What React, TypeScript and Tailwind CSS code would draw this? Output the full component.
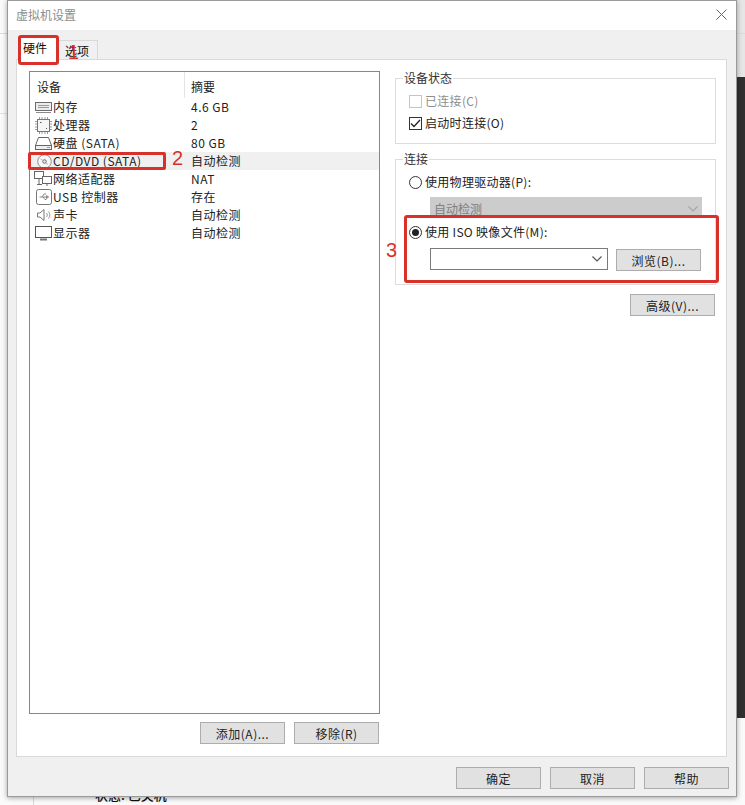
import React from 'react';

const font = { fontFamily: '"Noto Sans CJK SC", "Liberation Sans", sans-serif' };
const digitFont = { fontFamily: '"Liberation Sans", sans-serif' };

const MemoryIcon = () => (
  <svg width="17" height="13" viewBox="0 0 17 13" fill="none" stroke="#6b6b6b">
    <rect x="0.5" y="1.5" width="16" height="8" fill="#ececec" />
    <path d="M3 4.500h11M3 6.500h11" stroke="#9a9a9a" />
    <path d="M1 11.500h15" stroke="#8a8a8a" />
  </svg>
);

const CpuIcon = () => (
  <svg width="17" height="17" viewBox="0 0 17 17" fill="none" stroke="#777">
    <rect x="2.500" y="2.500" width="12" height="12" fill="#f6f6f6" />
    <path d="M4.500 0v2M7 0v2M10 0v2M12.500 0v2M4.500 15v2M7 15v2M10 15v2M12.500 15v2M0 4.500h2M0 7h2M0 10h2M0 12.500h2M15 4.500h2M15 7h2M15 10h2M15 12.500h2" stroke="#999" />
    <path d="M5 5.500h1.500M11 11.500h1" stroke="#555" />
  </svg>
);

const DiskIcon = () => (
  <svg width="17" height="14" viewBox="0 0 17 14" fill="none" stroke="#666">
    <path d="M3.500 1.500h10l3 8h-16z" fill="#fff" />
    <rect x="0.500" y="9.500" width="16" height="4" fill="#eee" />
    <path d="M12 11.500h3" stroke="#999" />
  </svg>
);

const CdIcon = () => (
  <svg width="15" height="15" viewBox="0 0 15 15" fill="none" stroke="#8f8f8f">
    <circle cx="7.500" cy="7.500" r="6.800" fill="#f7f7f7" />
    <circle cx="7.500" cy="7.500" r="1.800" fill="#e4e4e4" stroke="#707070" />
    <path d="M3.500 5l2 1.200M11 10.500l-2-1.500" stroke="#bbb" />
  </svg>
);

const NetworkIcon = () => (
  <svg width="18" height="16" viewBox="0 0 18 16" fill="none" stroke="#666">
    <rect x="0.500" y="0.500" width="9" height="7" fill="#fff" />
    <rect x="8.500" y="5.500" width="9" height="7" fill="#fff" />
    <path d="M5 8v5M3 13.500h5M13 13v2" />
  </svg>
);

const UsbIcon = () => (
  <svg width="16" height="16" viewBox="0 0 16 16" fill="none" stroke="#777">
    <rect x="0.500" y="0.500" width="15" height="15" rx="2" fill="#fff" />
    <path d="M3.500 8h9M12.500 8l-2-1.500v3zM6 8l2-3h2M7 8l2 2.500h1.500" stroke="#888" />
  </svg>
);

const SoundIcon = () => (
  <svg width="16" height="14" viewBox="0 0 16 14" fill="none" stroke="#777">
    <path d="M1.500 5h2.500l4-3.500v11l-4-3.500H1.500z" fill="#fff" />
    <path d="M10.500 5c1 1.200 1 2.800 0 4M12.500 3.500c1.800 2 1.800 5 0 7" stroke="#999" />
  </svg>
);

const DisplayIcon = () => (
  <svg width="17" height="15" viewBox="0 0 17 15" fill="none" stroke="#555">
    <rect x="0.500" y="0.500" width="16" height="11" fill="#fff" />
    <path d="M5 13.500h7" strokeWidth="2" stroke="#777" />
  </svg>
);

const Chevron = ({ color = '#555' }: { color?: string }) => (
  <svg width="10" height="6" viewBox="0 0 10 6" fill="none" stroke={color} strokeWidth="1.200">
    <path d="M0.500 0.500l4.500 4.500L9.500 0.500" />
  </svg>
);

const devices = [
  { name: '内存', summary: '4.6 GB', icon: <MemoryIcon /> },
  { name: '处理器', summary: '2', icon: <CpuIcon /> },
  { name: '硬盘 (SATA)', summary: '80 GB', icon: <DiskIcon /> },
  { name: 'CD/DVD (SATA)', summary: '自动检测', icon: <CdIcon />, selected: true },
  { name: '网络适配器', summary: 'NAT', icon: <NetworkIcon /> },
  { name: 'USB 控制器', summary: '存在', icon: <UsbIcon /> },
  { name: '声卡', summary: '自动检测', icon: <SoundIcon /> },
  { name: '显示器', summary: '自动检测', icon: <DisplayIcon /> },
];

const WinButton = ({ label, className = '' }: { label: string; className?: string }) => (
  <button className={`h-[22px] w-[85px] shrink-0 pt-[2px] bg-[#e1e1e1] border border-[#adadad] text-[12px] tracking-[0.5px] text-[#222] flex items-center justify-center ${className}`}>
    {label}
  </button>
);

export default function App() {
  return (
    <div className="relative w-[745px] h-[805px] overflow-hidden bg-[#fafafa] flex" style={font}>
      {/* window behind the dialog */}
      <div className="absolute right-0 top-0 w-[8px] h-[77px] bg-[#e6e6e6]" />
      <div className="absolute right-0 top-[77px] w-[8px] h-[641px] bg-[#303030]" />
      <div className="absolute left-0 top-[33px] w-full h-px bg-[#dcdcdc]" />
      <div className="absolute left-0 top-[113px] w-[7px] h-px bg-[#e2e2e2]" />
      <div className="absolute left-[33px] top-[790px] w-px h-[15px] bg-[#d8d8d8]" />
      <span className="absolute left-[95px] top-[785px] text-[13px] font-medium text-[#111] whitespace-nowrap">状态: 已关机</span>

      <div className="relative ml-[7px] w-[730px] h-[797px] bg-[#f0f0f0] border border-[#9a9a9a] shadow-[0_1px_5px_rgba(0,0,0,0.35)] flex flex-col">
        {/* title bar */}
        <div className="h-[29px] shrink-0 bg-white flex items-center justify-between pl-[8px] pr-[9px] pb-[2px]">
          <span className="text-[12px] text-[#8c8c8c]">虚拟机设置</span>
          <svg width="11" height="11" viewBox="0 0 11 11" stroke="#666" strokeWidth="1">
            <path d="M0.500 0.500l10 10M10.500 0.500l-10 10" />
          </svg>
        </div>

        {/* tabs */}
        <div className="flex h-[29px] shrink-0 items-end pl-[10px]">
          <div className="relative h-[24px] w-[40px] -mb-px bg-white border border-b-0 border-[#d9d9d9] pl-[4px] pt-[2px] text-[12px] text-[#111]">硬件</div>
          <div className="h-[19px] w-[40px] bg-[#f0f0f0] border border-b-0 border-l-0 border-[#d9d9d9] flex items-center pl-[7px] pt-[2px] text-[12px] text-[#111]">选项</div>
        </div>

        {/* tab body */}
        <div className="ml-[8px] mr-[9px] h-[698px] shrink-0 bg-white border border-[#d9d9d9] flex pl-[12px] pt-[11px] pr-[10px] gap-[15px]">
          <div className="w-[351px] shrink-0 flex flex-col">
            <div className="h-[643px] border border-[#828790] bg-white">
              <div className="flex h-[26px] text-[12px] text-[#222]">
                <div className="w-[155px] border-r border-[#e5e5e5] pl-[7px] pt-[6px]">设备</div>
                <div className="pl-[6px] pt-[6px]">摘要</div>
              </div>
              {devices.map((d) => (
                <div key={d.name} className={`flex h-[18px] items-center text-[12px] text-[#222] tracking-[0.5px] ${d.selected ? 'bg-[#f0f0f0]' : ''}`}>
                  <div className="w-[155px] flex items-center shrink-0">
                    <span className="w-[23px] flex justify-end pr-[1px] shrink-0">{d.icon}</span>
                    <span className="whitespace-nowrap">{d.name}</span>
                  </div>
                  <div className="pl-[6px] whitespace-nowrap">{d.summary}</div>
                </div>
              ))}
            </div>
            <div className="flex justify-end gap-[9px] mt-[8px] pr-px">
              <WinButton label="添加(A)..." />
              <WinButton label="移除(R)" />
            </div>
          </div>

          <div className="flex-1 flex flex-col">
            <fieldset className="h-[73px] border border-[#dcdcdc] pl-[13px]">
              <legend className="text-[12px] text-[#333] px-px -ml-[6px] leading-[14px]">设备状态</legend>
              <label className="flex items-center gap-[3px] h-[20px] mt-[6px] text-[12px] text-[#8e8e8e] tracking-[0.3px]">
                <span className="w-[13px] h-[13px] border border-[#c4c4c4] bg-white" />
                已连接(C)
              </label>
              <label className="flex items-center gap-[3px] h-[24px] text-[12px] text-[#222] tracking-[0.3px]">
                <span className="w-[13px] h-[13px] border border-[#333] bg-white flex items-center justify-center">
                  <svg width="11" height="9" viewBox="0 0 11 9" fill="none" stroke="#222" strokeWidth="1.300">
                    <path d="M1 4.500l3 3L10 1" />
                  </svg>
                </span>
                启动时连接(O)
              </label>
            </fieldset>

            <fieldset className="h-[133px] border border-[#dcdcdc] pl-[13px] mt-[8px]">
              <legend className="text-[12px] text-[#333] -ml-[6px] px-px leading-[14px]">连接</legend>
              <label className="flex items-center gap-[3px] h-[18px] mt-[7px] text-[12px] text-[#222] tracking-[0.3px]">
                <span className="w-[13px] h-[13px] rounded-full border border-[#333] bg-white" />
                使用物理驱动器(P):
              </label>
              <div className="mt-[6px] ml-[21px] h-[21px] w-[272px] bg-[#cccccc] flex items-center justify-between pl-[4px] pr-[4px] pt-[3px] text-[12px] text-[#7f7f7f]">
                自动检测
                <Chevron color="#a5a5a5" />
              </div>
              <label className="flex items-center gap-[3px] h-[20px] mt-[4px] text-[12px] text-[#222] tracking-[0.3px]">
                <span className="w-[13px] h-[13px] rounded-full border border-[#333] bg-white flex items-center justify-center">
                  <span className="w-[7px] h-[7px] rounded-full bg-[#222]" />
                </span>
                使用 ISO 映像文件(M):
              </label>
              <div className="flex items-start gap-[8px] ml-[21px] mt-[6px]">
                <div className="h-[22px] w-[178px] border border-[#7a7a7a] bg-white flex items-center justify-end pr-[5px]">
                  <Chevron />
                </div>
                <WinButton label="浏览(B)..." className="mt-px" />
              </div>
            </fieldset>

            <div className="flex justify-end mt-[9px] pr-px">
              <WinButton label="高级(V)..." />
            </div>
          </div>
        </div>

        {/* bottom buttons */}
        <div className="flex justify-end gap-[9px] pr-[7px] mt-[10px]">
          <WinButton label="确定" />
          <WinButton label="取消" />
          <WinButton label="帮助" />
        </div>

        {/* red annotations */}
        <div className="absolute left-[10px] top-[34px] w-[41px] h-[30px] border-[3px] border-[#d9302a] rounded-[3px]" />
        <span className="absolute left-[60px] top-[39px] text-[20px] leading-[24px] text-[#d9302a]" style={digitFont}>1</span>
        <div className="absolute left-[20px] top-[151px] w-[138px] h-[18px] border-[3px] border-[#d9302a] rounded-[2px]" />
        <span className="absolute left-[164px] top-[145px] text-[20px] leading-[24px] text-[#d9302a]" style={digitFont}>2</span>
        <div className="absolute left-[396px] top-[214px] w-[315px] h-[68px] border-[3px] border-[#d9302a] rounded-[3px]" />
        <span className="absolute left-[378px] top-[237px] text-[20px] leading-[24px] text-[#d9302a]" style={digitFont}>3</span>
      </div>
    </div>
  );
}
